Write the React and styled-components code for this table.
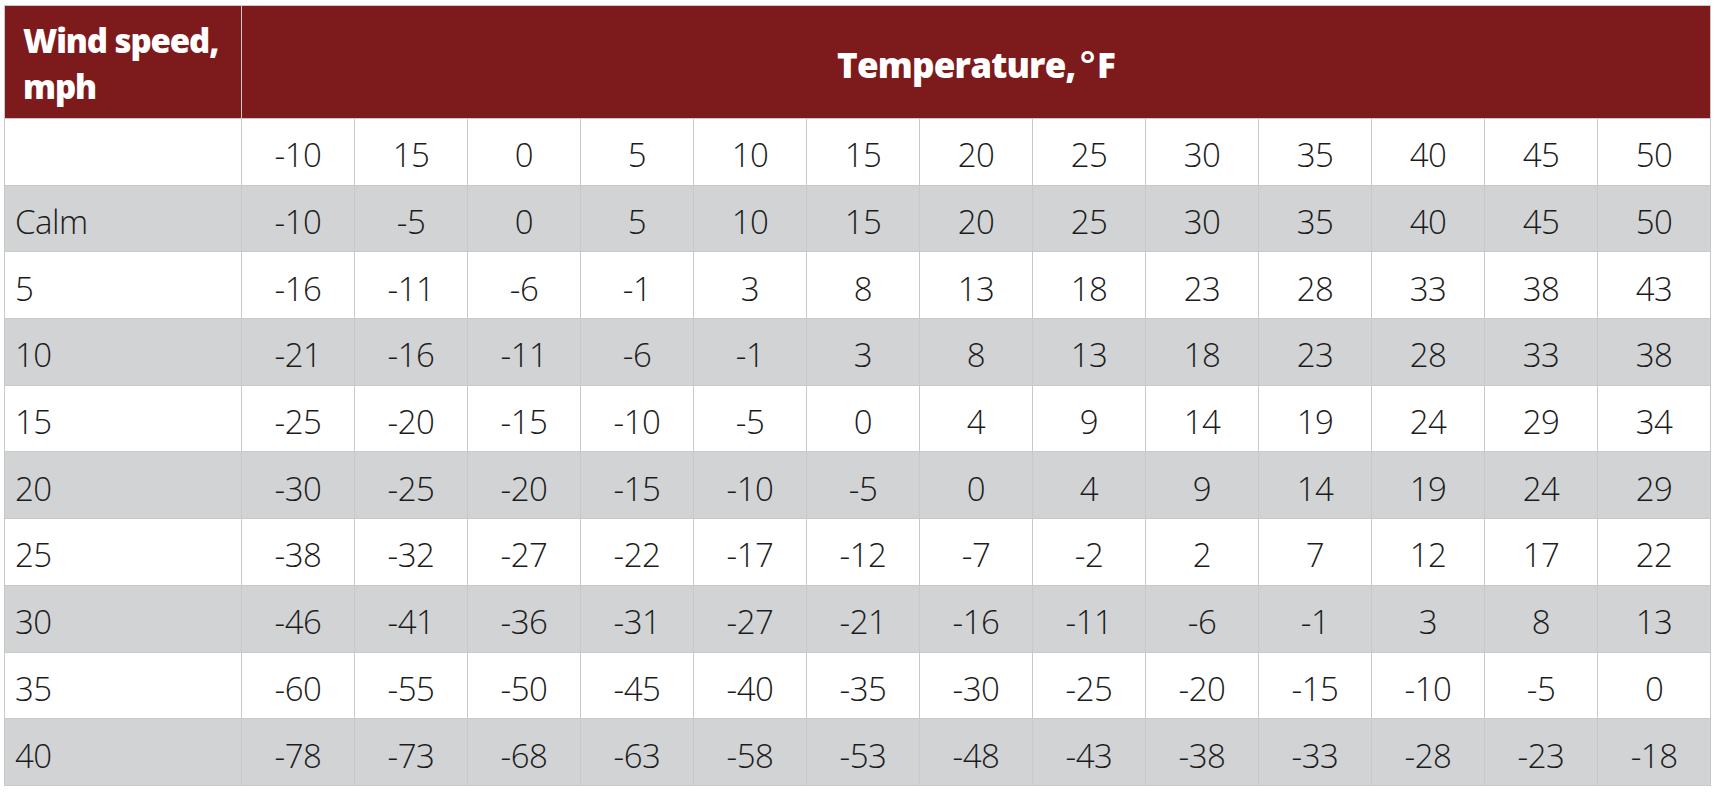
import React from "react";
import styled, { createGlobalStyle } from "styled-components";

const Global = createGlobalStyle`
  html, body { margin: 0; padding: 0; background: #ffffff; }
  body { font-family: "Open Sans", "Noto Sans", sans-serif; }
`;

const Page = styled.div`
  padding: 5px 0 0 4px;
`;

const Table = styled.table`
  border-collapse: collapse;
  table-layout: fixed;
  width: 1706px;
  border: 1px solid #c9c9c9;
`;

const Col = styled.col`
  width: ${(p) => p.$w}px;
`;

const HeadCell = styled.th`
  background: #7d1a1b;
  color: #ffffff;
  font-family: "Open Sans", sans-serif;
  font-weight: 800;
  font-size: ${(p) => (p.$left ? 33 : 35)}px;
  line-height: 46px;
  letter-spacing: ${(p) => (p.$left ? -1.1 : -0.8)}px;
  height: 113px;
  padding: 4px 0 0 ${(p) => (p.$left ? 18 : 0)}px;
  text-align: ${(p) => (p.$left ? "left" : "center")};
  vertical-align: middle;
  border: 1px solid #c9c9c9;
  box-sizing: border-box;
`;

const Degree = styled.span`
  font-weight: 600;
  font-size: 38px;
  margin: 0 2px 0 4px;
`;

const Row = styled.tr`
  background: ${(p) => (p.$shade ? "#d1d3d4" : "#ffffff")};
  height: 66.7px;
`;

const Cell = styled.td`
  border: 1px solid #c9c9c9;
  color: #1c1c1c;
  font-family: "Open Sans", sans-serif;
  font-weight: 300;
  font-size: 33px;
  letter-spacing: -0.5px;
  padding: 6px 0 0 ${(p) => (p.$label ? 10 : 0)}px;
  text-align: ${(p) => (p.$label ? "left" : "center")};
  vertical-align: middle;
`;

const temps = [-10, 15, 0, 5, 10, 15, 20, 25, 30, 35, 40, 45, 50];

const rows = [
  ["Calm", [-10, -5, 0, 5, 10, 15, 20, 25, 30, 35, 40, 45, 50]],
  ["5", [-16, -11, -6, -1, 3, 8, 13, 18, 23, 28, 33, 38, 43]],
  ["10", [-21, -16, -11, -6, -1, 3, 8, 13, 18, 23, 28, 33, 38]],
  ["15", [-25, -20, -15, -10, -5, 0, 4, 9, 14, 19, 24, 29, 34]],
  ["20", [-30, -25, -20, -15, -10, -5, 0, 4, 9, 14, 19, 24, 29]],
  ["25", [-38, -32, -27, -22, -17, -12, -7, -2, 2, 7, 12, 17, 22]],
  ["30", [-46, -41, -36, -31, -27, -21, -16, -11, -6, -1, 3, 8, 13]],
  ["35", [-60, -55, -50, -45, -40, -35, -30, -25, -20, -15, -10, -5, 0]],
  ["40", [-78, -73, -68, -63, -58, -53, -48, -43, -38, -33, -28, -23, -18]],
];

export default function App() {
  return (
    <Page>
      <Global />
      <Table>
        <colgroup>
          <Col $w={237} />
          {temps.map((_, i) => (
            <Col key={i} $w={113} />
          ))}
        </colgroup>
        <thead>
          <tr>
            <HeadCell $left>
              Wind speed,
              <br />
              mph
            </HeadCell>
            <HeadCell colSpan={13}>
              Temperature,<Degree>°</Degree>F
            </HeadCell>
          </tr>
        </thead>
        <tbody>
          <Row>
            <Cell $label></Cell>
            {temps.map((t, i) => (
              <Cell key={i}>{t}</Cell>
            ))}
          </Row>
          {rows.map(([label, vals], r) => (
            <Row key={label} $shade={r % 2 === 0}>
              <Cell $label>{label}</Cell>
              {vals.map((v, i) => (
                <Cell key={i}>{v}</Cell>
              ))}
            </Row>
          ))}
        </tbody>
      </Table>
    </Page>
  );
}
